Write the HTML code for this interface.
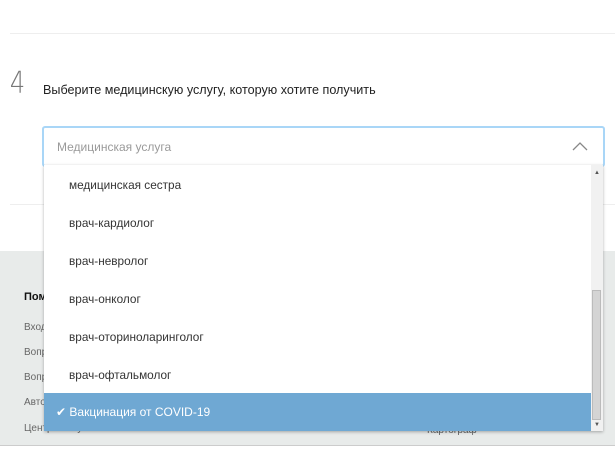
<!DOCTYPE html>
<html><head><meta charset="utf-8"><style>
body{margin:0;width:615px;height:449px;overflow:hidden;background:#fff;font-family:"Liberation Sans",sans-serif;position:relative}
.a{position:absolute}
.ft{color:#666;font-size:10px}
.it{position:absolute;left:69px;font-size:11.8px;color:#333}
</style></head><body>
<div class="a" style="left:10px;top:33px;width:605px;height:1px;background:#eee"></div>
<div class="a" style="left:8px;top:69px;font-size:30px;font-weight:100;color:#777;font-family:'DejaVu Sans',sans-serif;line-height:30px;transform:scaleX(.8)">4</div>
<div class="a" style="left:43px;top:83px;font-size:12.6px;color:#222">Выберите медицинскую услугу, которую хотите получить</div>
<div class="a" style="left:10px;top:204px;width:605px;height:1px;background:#eee"></div>
<div class="a" style="left:0;top:251px;width:615px;height:194px;background:#e8ebea"></div>
<div class="a" style="left:0;top:445px;width:615px;height:4px;background:#fff;border-top:1px solid #ccc"></div>
<div class="a" style="left:24px;top:291px;font-size:11px;font-weight:bold;color:#111">Пом</div>
<div class="a ft" style="left:24px;top:322px">Вход</div>
<div class="a ft" style="left:24px;top:347px">Вопр</div>
<div class="a ft" style="left:24px;top:372px">Вопр</div>
<div class="a ft" style="left:24px;top:397px">Авто</div>
<div class="a ft" style="left:24px;top:423px">Центр обслуживания</div>
<div class="a ft" style="left:427px;top:425px">Картограф</div>
<div class="a" style="left:42px;top:126px;width:559px;height:37px;border:2px solid #a9d6f7;border-radius:3px;background:#fff"></div>
<div class="a" style="left:57px;top:140px;font-size:12px;color:#9a9a9a">Медицинская услуга</div>
<svg class="a" style="left:571px;top:140px" width="18" height="12"><path d="M2 10 L9 3 L16 10" fill="none" stroke="#888" stroke-width="1.3"/></svg>
<div class="a" style="left:44px;top:165px;width:559px;height:266px;background:#fff;box-shadow:0 1px 3px rgba(0,0,0,.3)"></div>
<div class="it" style="top:178px">медицинская сестра</div>
<div class="it" style="top:216px">врач-кардиолог</div>
<div class="it" style="top:254px">врач-невролог</div>
<div class="it" style="top:292px">врач-онколог</div>
<div class="it" style="top:330px">врач-оториноларинголог</div>
<div class="it" style="top:368px">врач-офтальмолог</div>
<div class="a" style="left:44px;top:393px;width:547px;height:38px;background:#6fa8d3"></div>
<div class="a" style="left:56px;top:405px;font-size:12px;color:#fff">✔ Вакцинация от COVID-19</div>
<div class="a" style="left:591px;top:165px;width:12px;height:266px;background:#f1f1f1"></div>
<div class="a" style="left:592px;top:290px;width:9px;height:130px;background:#d4d4d4;border:1px solid #bbb;box-sizing:border-box"></div>
<div class="a" style="left:594px;top:170px;font-size:6px;color:#555">▲</div>
<div class="a" style="left:594px;top:422px;font-size:6px;color:#555">▼</div>
</body></html>
